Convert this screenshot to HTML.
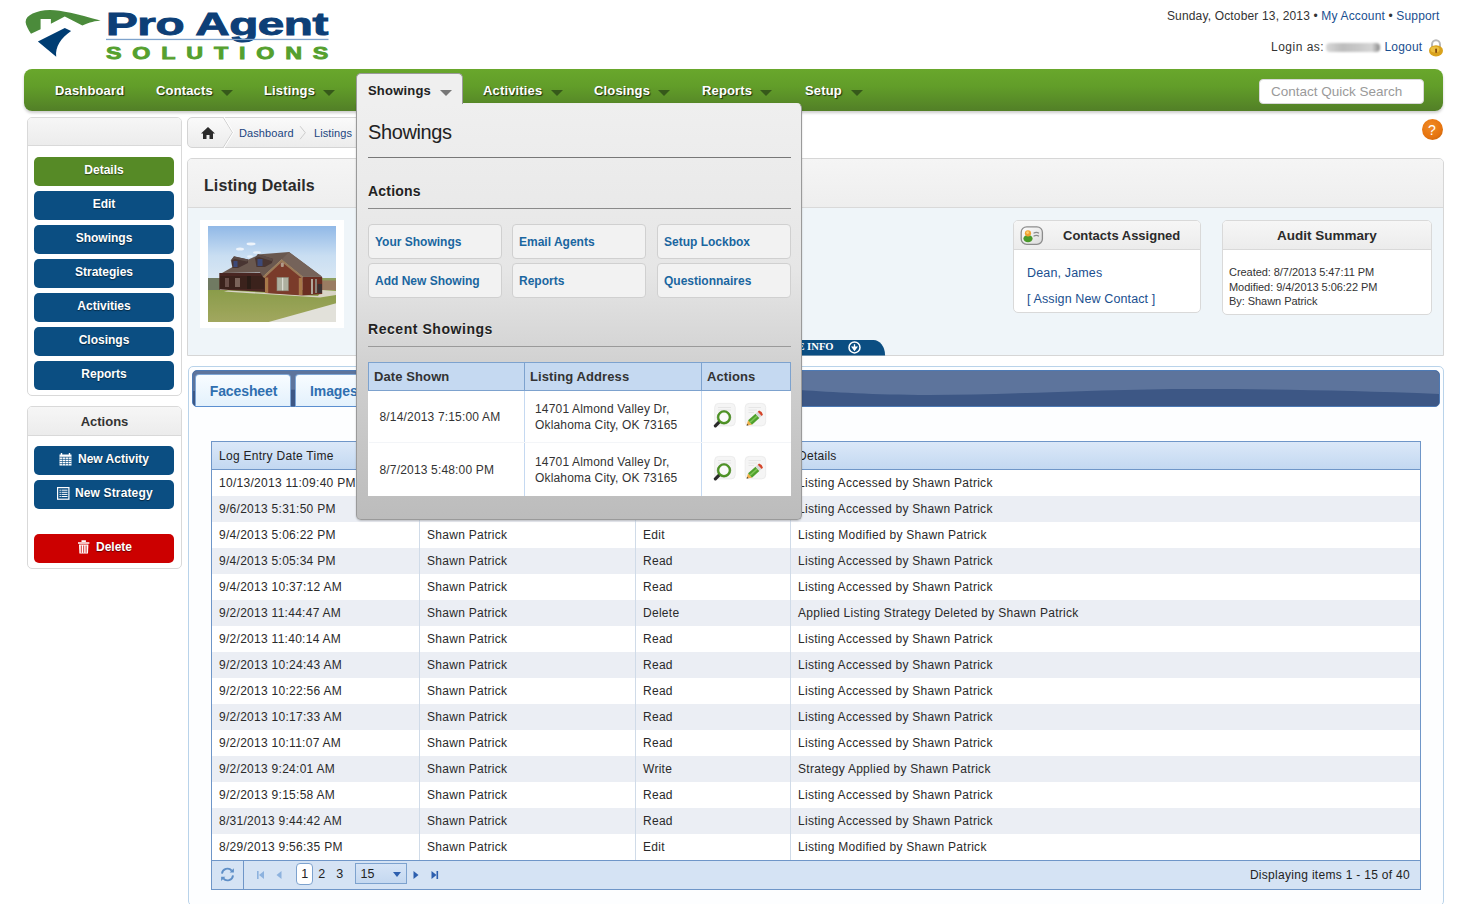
<!DOCTYPE html>
<html><head><meta charset="utf-8"><title>Listing Details</title>
<style>
*{box-sizing:border-box;margin:0;padding:0}
html,body{width:1463px;height:904px;overflow:hidden;background:#fff;font-family:"Liberation Sans",Arial,sans-serif;font-size:12px;color:#333}
.abs{position:absolute}
a{color:#1a4f8f;text-decoration:none}
/* header */
#toplinks{position:absolute;right:23.5px;top:9px;font-size:12px;letter-spacing:.16px;color:#333;white-space:nowrap}
#login{font-size:12px;color:#333;white-space:nowrap}
/* nav */
#nav{position:absolute;left:24px;top:69px;width:1419px;height:42px;border-radius:8px;background:linear-gradient(#69a72c 0%,#629e29 40%,#5a8f28 70%,#527f27 100%);box-shadow:0 2px 3px rgba(0,0,0,.2)}
#nav .it{position:absolute;top:14px;letter-spacing:.15px;font-weight:bold;font-size:13px;color:#fff;text-shadow:1px 1px 1px rgba(0,0,0,.7);white-space:nowrap}
.arr{position:absolute;width:0;height:0;margin-top:.5px;border-left:6.5px solid transparent;border-right:6.5px solid transparent;border-top:6.5px solid #36591a}
#search{position:absolute;left:1235px;top:10px;width:165px;height:25px;background:#fff;border-radius:4px;border:1px solid #d8d8d8;color:#9a9a9a;font-size:13.5px;line-height:24px;padding-left:11px}
/* sidebar */
.panel{position:absolute;border:1px solid #d9d9d9;border-radius:5px;background:#fff}
.phead{background:linear-gradient(#f6f6f6,#ececec);border-bottom:1px solid #d9d9d9;border-radius:4px 4px 0 0}
.btn{position:absolute;left:34px;width:140px;height:29px;border-radius:5px;background:#0b4e82;color:#fff;font-weight:bold;font-size:12px;text-align:center;line-height:27px;text-shadow:0 1px 1px rgba(0,0,0,.5)}

.tab{position:absolute;top:374px;height:33px;border:1px solid #7ea6d6;border-bottom:1px solid #5b8fd0;border-radius:4px 4px 0 0;background:linear-gradient(#f8fcff,#e3f1fc);color:#2f6fb0;font-weight:bold;font-size:14px;text-align:center;line-height:32px;letter-spacing:-.1px;padding-left:1px}
#grid{position:absolute;left:212px;top:442px;letter-spacing:.28px;width:1208px;border-collapse:separate;border-spacing:0;table-layout:fixed;font-size:12px;color:#2a2a2a}
#grid th{height:28px;background:linear-gradient(#dbe8f8,#c3d8f1);border-bottom:1px solid #6f96c8;border-left:1px solid #9dbbe0;text-align:left;font-weight:normal;padding-left:7px;color:#222}
#grid th:first-child{border-left:none}
#grid td{height:26px;padding-left:7px;padding-top:0;border-left:1px solid #d0dbe8;white-space:nowrap}
#grid td:first-child{border-left:none}
#grid tr.alt td{background:#ebeef4}
#pager{position:absolute;left:212px;top:860px;width:1208px;height:29px;background:#d5e3f4;border-top:1px solid #6f96c8}

#dd{position:absolute;left:356px;top:103px;width:446px;height:417px;border:1px solid #9a9a9a;border-top-color:#ededed;border-radius:0 5px 5px 5px;background:linear-gradient(#efefef 0%,#e6e6e6 40%,#cfcfcf 65%,#bcbcbc 100%);z-index:10;box-shadow:0 1px 2px rgba(0,0,0,.2)}
#dd .hr{position:absolute;left:11px;width:423px;height:1px;background:#777}
#dd .h3{left:11px;font-size:14px;font-weight:bold;color:#222;letter-spacing:.2px;text-shadow:0 1px 0 rgba(255,255,255,.6)}
#dd .mb{position:absolute;width:134px;height:35px;border:1px solid #d0d0d0;border-radius:4px;background:#f2f2f2;color:#1a66a0;font-weight:bold;font-size:12px;line-height:35px;padding-left:6px}
#rs{position:absolute;left:11px;top:258px;width:423px;border-collapse:collapse;table-layout:fixed;background:#fff;font-size:12px;color:#333}
#rs th{height:28px;background:#c5d9f1;border:1px solid #7da2ce;text-align:left;padding-left:5px;font-size:13px;font-weight:bold;color:#333;letter-spacing:.1px}
#rs td{height:52px;padding-top:0;letter-spacing:.17px;border-left:1px solid #c5d9f1;border-bottom:1px solid #f3f5f8;vertical-align:middle}
#rs td:first-child{border-left:none}
#rs tr.r2 td{height:53px;border-bottom:none;padding-top:2px}
#rs .dt{padding-left:11px}
#rs .ad{display:block;padding-left:10px;line-height:16px}
</style></head><body>

<!-- LOGO -->
<svg class="abs" style="left:0;top:0" width="340" height="66" viewBox="0 0 340 66">
 <path d="M25.6 21.9 C26 15 36 10.6 49.9 10.1 C62 10.2 76 14 100.6 20.6 C92 21.5 87 23.5 82.4 25.6 L64.8 16.6 L50.9 23.8 L50.9 19.1 L40.6 19.1 L40.6 29.2 L31 33.7 C28 29 25.8 25 25.6 21.9 Z" fill="#4b8b3b"/>
 <path d="M64.8 28 L71.1 31.1 C61 38 55 47 56.2 56.8 L37.9 41.5 Z" fill="#003d73"/>
 <g transform="translate(106,34.5) scale(1.49,1)"><text x="0" y="0" font-family="Liberation Sans,sans-serif" font-weight="bold" font-size="32" fill="#0d3f77" stroke="#0d3f77" stroke-width=".9" letter-spacing="-.3">Pro Agent</text></g>
 <rect x="106" y="38.8" width="222.5" height="1.3" fill="#7fa3cc"/>
 <g transform="translate(106,59.4) scale(1.42,1)"><text x="0" y="0" font-family="Liberation Sans,sans-serif" font-weight="bold" font-size="16.4" fill="#55a02e" stroke="#55a02e" stroke-width=".8" letter-spacing="7.62">SOLUTIONS</text></g>
</svg>

<div id="toplinks">Sunday, October 13, 2013 • <a>My Account</a> • <a>Support</a></div>
<div id="login"><span class="abs" style="left:1271px;top:40px;letter-spacing:.5px">Login as:</span>
<span class="abs" style="left:1326px;top:42.5px;width:54px;height:9px;background:linear-gradient(90deg,#d8d8d8,#bdbdbd 30%,#c8c8c8 60%,#d5d5d5 85%,#888 100%);border-radius:4px;filter:blur(1.2px)"></span>
<a class="abs" style="left:1384.5px;top:40px;letter-spacing:.2px">Logout</a>
<svg class="abs" style="left:1427px;top:38px" width="18" height="20" viewBox="0 0 18 20">
 <path d="M5 10 V6.5 A4 4.2 0 0 1 13 6.5 V10" fill="none" stroke="#b8b8b8" stroke-width="2"/>
 <ellipse cx="9" cy="12.8" rx="7" ry="5.6" fill="#d9a21c"/>
 <ellipse cx="8" cy="11.5" rx="4.5" ry="3" fill="#f0c84a" opacity=".8"/>
 <rect x="8.3" y="10.5" width="1.6" height="4.6" rx=".8" fill="#7a3e0a"/>
</svg></div>

<!-- NAV -->
<div id="nav">
 <div class="it" style="left:31px">Dashboard</div>
 <div class="it" style="left:132px">Contacts</div><div class="arr" style="left:197px;top:20px"></div>
 <div class="it" style="left:240px">Listings</div><div class="arr" style="left:299px;top:20px"></div>
 <div class="it" style="left:459px">Activities</div><div class="arr" style="left:527px;top:20px"></div>
 <div class="it" style="left:570px">Closings</div><div class="arr" style="left:634px;top:20px"></div>
 <div class="it" style="left:678px">Reports</div><div class="arr" style="left:736px;top:20px"></div>
 <div class="it" style="left:781px">Setup</div><div class="arr" style="left:827px;top:20px"></div>
 <div id="search">Contact Quick Search</div>
</div>

<!-- SIDEBAR -->
<div class="panel" style="left:27px;top:117px;width:155px;height:279px"><div class="phead" style="height:28px"></div></div>
<div class="btn" style="top:157px;background:#568a26">Details</div>
<div class="btn" style="top:191px">Edit</div>
<div class="btn" style="top:225px">Showings</div>
<div class="btn" style="top:259px">Strategies</div>
<div class="btn" style="top:293px">Activities</div>
<div class="btn" style="top:327px">Closings</div>
<div class="btn" style="top:361px">Reports</div>

<div class="panel" style="left:27px;top:406px;width:155px;height:163px"><div class="phead" style="height:29px;text-align:center;font-weight:bold;font-size:13px;line-height:29px;color:#333">Actions</div></div>
<div class="btn" style="top:446px;text-align:left;padding-left:44px"><svg class="abs" style="left:25px;top:7px" width="13" height="13" viewBox="0 0 13 13"><path d="M.5 1.5 H12.5 V12.5 H.5Z" fill="#fff"/><path d="M2.5 0 V2 M10.5 0 V2" stroke="#fff" stroke-width="1.4"/><path d="M.5 4.2 H12.5 M.5 6.4 H12.5 M.5 8.5 H12.5 M.5 10.6 H12.5" stroke="#0b4e82" stroke-width=".7"/><path d="M3.5 4 V12.5 M6.5 4 V12.5 M9.5 4 V12.5" stroke="#0b4e82" stroke-width=".5"/></svg>New Activity</div>
<div class="btn" style="top:480px;text-align:left;padding-left:41px;letter-spacing:.14px"><svg class="abs" style="left:23px;top:7px" width="13" height="13" viewBox="0 0 13 13"><rect x=".6" y=".6" width="11.3" height="11.6" fill="none" stroke="#fff" stroke-width="1.2"/><path d="M2.5 3.2 H10.5 M2.5 5.3 H10.5 M2.5 7.4 H10.5 M2.5 9.5 H10.5" stroke="#fff" stroke-width="1"/><path d="M4.3 2 V11" stroke="#0b4e82" stroke-width=".7"/></svg>New Strategy</div>
<div class="btn" style="top:534px;background:#cc0000;text-align:left;padding-left:62px"><svg class="abs" style="left:44px;top:6px" width="12" height="14" viewBox="0 0 12 14"><path d="M0 2.2 H11.4 V3.8 H0Z M3.5 .3 H7.9 V2 H3.5Z" fill="#fff"/><path d="M1 4.6 H10.4 L10 13.6 H1.4Z" fill="#fff"/><path d="M3.3 5.5 V12.8 M5.7 5.5 V12.8 M8.1 5.5 V12.8" stroke="#cc0000" stroke-width=".8"/></svg>Delete</div>


<!-- BREADCRUMB -->
<div class="panel" style="left:187px;top:117px;width:300px;height:31px;background:linear-gradient(#fafafa,#ececec);border-color:#d4d4d4"></div>
<svg class="abs" style="left:187px;top:117px;overflow:hidden" width="200" height="31" viewBox="0 0 200 31">
 <path d="M14 16.5 L21 10 L28 16.5 L26 16.5 L26 22 L22.5 22 L22.5 18 L19.5 18 L19.5 22 L16 22 L16 16.5 Z" fill="#2b2b2b"/>
 <path d="M36 0 L45.5 15.5 L36 31" fill="none" stroke="#cdcdcd" stroke-width="1"/>
 <path d="M37 0 L46.5 15.5 L37 31" fill="none" stroke="#fff" stroke-width="1"/>
 <path d="M113.1 9.2 L118.3 15.7 L113.1 22.2" fill="none" stroke="#cdcdcd" stroke-width="1"/>
</svg>
<div class="abs" style="left:239px;top:127px;font-size:11px;letter-spacing:.1px;color:#1b4580">Dashboard</div>
<div class="abs" style="left:314px;top:127px;font-size:11px;letter-spacing:.1px;color:#1b4580">Listings</div>

<!-- help icon -->
<div class="abs" style="left:1421.5px;top:118.5px;width:21px;height:21px;border-radius:50%;background:radial-gradient(circle at 42% 35%,#f08a25,#e6740f 60%,#c9640c 85%,#a8500a);color:#fff;font-size:14px;text-align:center;line-height:22px">?</div>

<!-- LISTING DETAILS -->
<div class="panel" style="left:187px;top:158px;width:1257px;height:198px;background:#eff5f9;border-color:#d6d6d6;border-radius:5px 5px 0 0">
 <div class="phead" style="height:49px;background:linear-gradient(#f5f5f5,#eeeeee)"></div>
</div>
<div class="abs" style="left:204px;top:177px;font-size:16px;font-weight:bold;color:#2b2b2b;letter-spacing:.1px">Listing Details</div>
<div class="abs" style="left:200px;top:220px;width:144px;height:108px;background:#fff"></div>
<svg class="abs" style="left:208px;top:226px" width="128" height="96" viewBox="0 0 128 96">
 <defs><linearGradient id="sky" x1="0" y1="0" x2="0" y2="1"><stop offset="0" stop-color="#8db6e6"/><stop offset=".55" stop-color="#c9def2"/><stop offset="1" stop-color="#dbe8f3"/></linearGradient>
 <linearGradient id="grs" x1="0" y1="0" x2="0" y2="1"><stop offset="0" stop-color="#8a9c4a"/><stop offset="1" stop-color="#a3a860"/></linearGradient>
 <filter id="bl"><feGaussianBlur stdDeviation=".45"/></filter></defs>
 <g filter="url(#bl)">
 <rect x="-2" y="-2" width="132" height="58" fill="url(#sky)"/>
 <ellipse cx="32" cy="23" rx="4" ry="1.6" fill="#eef4fb"/><ellipse cx="43" cy="18" rx="4.5" ry="1.4" fill="#eef4fb"/><ellipse cx="49" cy="26.5" rx="4" ry="1.3" fill="#e6f0fa"/><ellipse cx="42" cy="30.5" rx="3" ry="1.2" fill="#e6f0fa"/>
 <rect x="-2" y="52" width="14" height="13" fill="#6f7a62"/>
 <rect x="112" y="52" width="18" height="13" fill="#9a7b62"/>
 <rect x="114" y="52" width="16" height="2.5" fill="#8ea060"/>
 <rect x="-2" y="64" width="132" height="34" fill="url(#grs)"/>
 <path d="M16 65.5 L112 71.5 L128 69 L128 65 L114 64 L110 70 L20 64.5Z" fill="#d8d4c6"/>
 <path d="M57 97 L129 77 L129 97Z" fill="#e2e1da"/>
 <!-- porch/left wall -->
 <path d="M11.3 47 L57 47 L57 66 L11.3 63.5Z" fill="#4a2820"/>
 <rect x="12" y="50" width="44" height="13" fill="#3a211c"/>
 <rect x="17" y="52" width="4" height="9" fill="#6a5048"/><rect x="27" y="52" width="5" height="9" fill="#7a645a"/><rect x="39" y="50" width="4" height="13" fill="#2a1a18"/>
 <!-- right side wall -->
 <path d="M94.3 51 L114.2 51 L114.2 68 L94.3 69.5Z" fill="#6a2f24"/>
 <rect x="103" y="53" width="2" height="15" fill="#b0a89a"/><rect x="107" y="53" width="2" height="14" fill="#8a8278"/><rect x="109.5" y="58" width="4.5" height="9" fill="#3a3230"/>
 <!-- main roof -->
 <path d="M14 46.9 L28 39 L52.4 28.3 L81 26 L114.2 50.8 L94.9 50.8 L73.7 33.6 L55 50.8 L52 46.5 Z" fill="#6a5850"/>
 <path d="M73.7 33.6 L81 26 L114.2 50.8 L94.9 50.8Z" fill="#75635a"/>
 <!-- dormers -->
 <path d="M23 34.5 L26 30.5 L40 33.5 L40 37 L30 42 L24.5 42Z" fill="#4a3630"/><rect x="25.5" y="35" width="4" height="6" fill="#3c4a78"/><path d="M22.5 34.8 L26 30.3 L40.5 33.5 L39 35.5 L27 33Z" fill="#5c4c46"/>
 <path d="M47 32 L50 28.3 L65 33 L64 37 L57 41 L48.5 41Z" fill="#4a3630"/><rect x="49.5" y="33" width="5" height="7" fill="#3c4a78"/><path d="M46.5 32.3 L50 28 L65.5 33 L63.5 35 L51 31Z" fill="#5c4c46"/>
 <!-- front gable -->
 <path d="M73.7 34.8 L94.3 51.5 L94.3 69.5 L57 67 L57 51 Z" fill="#7a3a2c"/>
 <path d="M73.7 33.2 L95.5 51 L93.5 52 L73.7 36 L56.5 52 L54.5 50.8Z" fill="#9a7a58"/>
 <rect x="57" y="51.5" width="3.2" height="15.5" fill="#a87848"/><rect x="90.8" y="52" width="3.5" height="17" fill="#a87848"/>
 <rect x="69" y="51.5" width="11.3" height="13.3" fill="#aeb0a0"/><rect x="74.2" y="51.5" width="1" height="13.3" fill="#e8e8e0"/><rect x="69" y="51.5" width="11.3" height="13.3" fill="none" stroke="#8a8a7a" stroke-width=".6"/>
 <rect x="72.8" y="36.5" width="3" height="4.5" rx="1" fill="#b09a88"/>
 </g>
</svg>

<!-- Contacts Assigned -->
<div class="panel" style="left:1013px;top:220px;width:188px;height:93px;border-color:#d9d9d9">
 <div class="phead" style="height:29px;font-weight:bold;font-size:13px;line-height:30px;color:#2b2b2b;padding-left:49px">Contacts Assigned</div>
 <div style="padding:16px 0 0 13px;font-size:12.5px;letter-spacing:.15px;color:#1a4f8f">Dean, James</div>
 <div style="padding:12px 0 0 13px;font-size:12.5px;letter-spacing:.12px;color:#1a4f8f">[ Assign New Contact ]</div>
</div>
<svg class="abs" style="left:1019px;top:225px" width="26" height="22" viewBox="0 0 26 22">
 <defs><linearGradient id="cg" x1="0" y1="0" x2="1" y2="1"><stop offset="0" stop-color="#fdfdfd"/><stop offset="1" stop-color="#dcdcdc"/></linearGradient></defs>
 <rect x="2.2" y="1.8" width="21.2" height="17.6" rx="5.5" fill="url(#cg)" stroke="#8c8c8c" stroke-width="1.3"/>
 <ellipse cx="9" cy="13.6" rx="4.6" ry="3.6" fill="#4a9a2a"/>
 <circle cx="9" cy="8.3" r="3.1" fill="#f0a030"/><circle cx="8.6" cy="7.6" r="1.4" fill="#fbd070"/>
 <path d="M14.5 8.2 Q17.5 6.6 20 8.2 M14.5 11.2 Q17.5 9.6 20 11.2" fill="none" stroke="#8a8a8a" stroke-width="1.1"/>
</svg>
<!-- Audit Summary -->
<div class="panel" style="left:1222px;top:220px;width:210px;height:95px;border-color:#d9d9d9">
 <div class="phead" style="height:29px;font-weight:bold;font-size:13.5px;line-height:30px;color:#2b2b2b;text-align:center">Audit Summary</div>
 <div style="padding:15px 0 0 6px;font-size:11px;letter-spacing:-.05px;line-height:14.5px;color:#333">Created: 8/7/2013 5:47:11 PM<br>Modified: 9/4/2013 5:06:22 PM<br>By: Shawn Patrick</div>
</div>

<!-- MORE INFO tab -->
<svg class="abs" style="left:700px;top:340px" width="190" height="16" viewBox="0 0 190 16">
 <path d="M0 15.4 V0 H173.5 A11.6 15.4 0 0 1 185.1 15.4 Z" fill="#0b4e82"/>
 <text x="71.5" y="10.4" font-family="Liberation Serif,serif" font-weight="bold" font-size="10.6" fill="#fff">MORE INFO</text>
 <circle cx="154.5" cy="7.4" r="5.5" fill="none" stroke="#fff" stroke-width="1.5"/>
 <path d="M154.5 4.2 V8.2 M152.3 7.2 L154.5 10.2 L156.7 7.2Z" stroke="#fff" stroke-width="1.3" fill="#fff"/>
</svg>

<!-- TAB CONTAINER -->
<div class="abs" style="left:188px;top:366px;width:1256px;height:540px;border:1px solid #b9d3ea;border-radius:5px;background:#fdfeff"></div>
<div class="abs" style="left:192px;top:370px;width:1248px;height:37px;border-radius:5px;background:#3f5a88;overflow:hidden;border:1px solid #4d7ab5">
 <svg width="1248" height="37" viewBox="0 0 1248 37" preserveAspectRatio="none"><rect width="1248" height="37" fill="#3d5785"/><path d="M0 0 H1248 V23 C1160 19.5 1080 18 1005 18 C900 18 820 24 736 24 C680 24 640 21 607 19 C500 14 300 16 0 20 Z" fill="#5d749c"/></svg>
</div>
<div class="tab" style="left:195px;width:96px">Facesheet</div>
<div class="tab" style="left:295px;width:78px;text-align:left;padding-left:14px">Images</div>

<!-- GRID -->
<div class="abs" style="left:211px;top:441px;width:1210px;height:449px;border:1px solid #6f96c8;background:#fff"></div>
<table id="grid" cellspacing="0">
<colgroup><col style="width:207px"><col style="width:216px"><col style="width:155px"><col></colgroup>
<tr class="hd"><th>Log Entry Date Time</th><th>User</th><th>Action</th><th>Details</th></tr>
<tr><td>10/13/2013 11:09:40 PM</td><td>Shawn Patrick</td><td>Read</td><td>Listing Accessed by Shawn Patrick</td></tr>
<tr class="alt"><td>9/6/2013 5:31:50 PM</td><td>Shawn Patrick</td><td>Read</td><td>Listing Accessed by Shawn Patrick</td></tr>
<tr><td>9/4/2013 5:06:22 PM</td><td>Shawn Patrick</td><td>Edit</td><td>Listing Modified by Shawn Patrick</td></tr>
<tr class="alt"><td>9/4/2013 5:05:34 PM</td><td>Shawn Patrick</td><td>Read</td><td>Listing Accessed by Shawn Patrick</td></tr>
<tr><td>9/4/2013 10:37:12 AM</td><td>Shawn Patrick</td><td>Read</td><td>Listing Accessed by Shawn Patrick</td></tr>
<tr class="alt"><td>9/2/2013 11:44:47 AM</td><td>Shawn Patrick</td><td>Delete</td><td>Applied Listing Strategy Deleted by Shawn Patrick</td></tr>
<tr><td>9/2/2013 11:40:14 AM</td><td>Shawn Patrick</td><td>Read</td><td>Listing Accessed by Shawn Patrick</td></tr>
<tr class="alt"><td>9/2/2013 10:24:43 AM</td><td>Shawn Patrick</td><td>Read</td><td>Listing Accessed by Shawn Patrick</td></tr>
<tr><td>9/2/2013 10:22:56 AM</td><td>Shawn Patrick</td><td>Read</td><td>Listing Accessed by Shawn Patrick</td></tr>
<tr class="alt"><td>9/2/2013 10:17:33 AM</td><td>Shawn Patrick</td><td>Read</td><td>Listing Accessed by Shawn Patrick</td></tr>
<tr><td>9/2/2013 10:11:07 AM</td><td>Shawn Patrick</td><td>Read</td><td>Listing Accessed by Shawn Patrick</td></tr>
<tr class="alt"><td>9/2/2013 9:24:01 AM</td><td>Shawn Patrick</td><td>Write</td><td>Strategy Applied by Shawn Patrick</td></tr>
<tr><td>9/2/2013 9:15:58 AM</td><td>Shawn Patrick</td><td>Read</td><td>Listing Accessed by Shawn Patrick</td></tr>
<tr class="alt"><td>8/31/2013 9:44:42 AM</td><td>Shawn Patrick</td><td>Read</td><td>Listing Accessed by Shawn Patrick</td></tr>
<tr><td>8/29/2013 9:56:35 PM</td><td>Shawn Patrick</td><td>Edit</td><td>Listing Modified by Shawn Patrick</td></tr>
</table>
<div id="pager">
 <div class="abs" style="left:31px;top:0;width:1px;height:28px;background:#6f96c8"></div>
 <svg class="abs" style="left:7px;top:5px" width="17" height="17" viewBox="0 0 20 20">
  <path d="M3.5 9 A6.5 6.5 0 0 1 15 5.5" fill="none" stroke="#5f8fc7" stroke-width="2.2"/>
  <path d="M16.5 11 A6.5 6.5 0 0 1 5 14.5" fill="none" stroke="#5f8fc7" stroke-width="2.2"/>
  <path d="M12.5 7.5 L17.5 7.5 L17.5 2.5 Z" fill="#5f8fc7"/>
  <path d="M7.5 12.5 L2.5 12.5 L2.5 17.5 Z" fill="#5f8fc7"/>
 </svg>
 <svg class="abs" style="left:44px;top:8px" width="190" height="12" viewBox="0 0 190 12">
  <rect x="1" y="2" width="1.6" height="8" fill="#8db2de"/><path d="M8 2 L3 6 L8 10Z" fill="#8db2de"/>
  <path d="M25.5 2 L20.5 6 L25.5 10Z" fill="#8db2de"/>
  <path d="M157.5 2 L162.5 6 L157.5 10Z" fill="#2d5fae"/>
  <path d="M175.5 2 L180.5 6 L175.5 10Z" fill="#2d5fae"/><rect x="180.5" y="2" width="1.6" height="8" fill="#2d5fae"/>
 </svg>
 <div class="abs" style="left:84px;top:2px;width:17px;height:22px;border:1px solid #7da2ce;border-radius:4px;background:#fff"></div>
 <div class="abs" style="left:89.3px;top:5.5px;font-size:12.5px;color:#222">1</div>
 <div class="abs" style="left:106.3px;top:5.5px;font-size:12.5px;color:#222">2</div>
 <div class="abs" style="left:124.3px;top:5.5px;font-size:12.5px;color:#222">3</div>
 <div class="abs" style="left:143px;top:2px;width:52px;height:21px;border:1px solid #7da2ce;background:linear-gradient(#d6e4f6,#c4d8f0)"></div>
 <div class="abs" style="left:148.5px;top:5.5px;font-size:12.5px;color:#222">15</div>
 <div class="abs" style="left:181px;top:11px;width:0;height:0;border-left:4.5px solid transparent;border-right:4.5px solid transparent;border-top:5px solid #2d5fae"></div>

 <div class="abs" style="right:10px;top:6.5px;font-size:12px;letter-spacing:.3px;color:#222">Displaying items 1 - 15 of 40</div>
</div>

<!-- SHOWINGS TAB + DROPDOWN -->
<div class="abs" style="left:356px;top:73px;width:106.5px;height:30.5px;background:#efefef;border:1px solid #9a9a9a;border-bottom:none;border-radius:5px 5px 0 0;z-index:11"></div>
<div class="abs" style="left:368px;top:83px;font-weight:bold;font-size:13px;letter-spacing:.2px;color:#222;z-index:12">Showings</div>
<div class="arr" style="left:440px;top:89px;border-top-color:#777;z-index:12"></div>
<div id="dd">
 <div class="abs" style="left:11px;top:17px;font-size:20px;color:#222;letter-spacing:-0.4px">Showings</div>
 <div class="hr" style="top:53px"></div>
 <div class="abs h3" style="top:79px">Actions</div>
 <div class="hr" style="top:104px;background:#8a8a8a"></div>
 <div class="mb" style="left:11px;top:120px">Your Showings</div>
 <div class="mb" style="left:155px;top:120px">Email Agents</div>
 <div class="mb" style="left:300px;top:120px">Setup Lockbox</div>
 <div class="mb" style="left:11px;top:159px">Add New Showing</div>
 <div class="mb" style="left:155px;top:159px">Reports</div>
 <div class="mb" style="left:300px;top:159px">Questionnaires</div>
 <div class="abs h3" style="top:217px;letter-spacing:.55px">Recent Showings</div>
 <div class="hr" style="top:242px;background:#9a9a9a"></div>
 <table id="rs" cellspacing="0">
 <colgroup><col style="width:156px"><col style="width:177px"><col style="width:89px"></colgroup>
 <tr><th>Date Shown</th><th>Listing Address</th><th>Actions</th></tr>
 <tr><td><span class="dt">8/14/2013 7:15:00 AM</span></td><td><span class="ad">14701 Almond Valley Dr,<br>Oklahoma City, OK 73165</span></td><td></td></tr>
 <tr class="r2"><td><span class="dt">8/7/2013 5:48:00 PM</span></td><td><span class="ad">14701 Almond Valley Dr,<br>Oklahoma City, OK 73165</span></td><td></td></tr>
 </table>
</div>
<svg class="abs" style="left:712px;top:402px;z-index:13" width="24" height="26" viewBox="0 0 24 26">
<rect x="2.7" y="1.4" width="20.5" height="22.5" rx="4" fill="#f5f5f5" stroke="#ececec" stroke-width="1"/>
<path d="M6 5.5 H19 M6 8 H19" stroke="#e6e6e6" stroke-width="1"/>
<path d="M7.6 19.6 L3.4 23.8" stroke="#2a2a2a" stroke-width="3.2" stroke-linecap="round"/>
<circle cx="12" cy="15.3" r="5.8" fill="#fafafa" stroke="#4f9426" stroke-width="2.2"/>
<circle cx="12" cy="15.3" r="6.8" fill="none" stroke="#3c7a18" stroke-width=".5"/>
</svg><svg class="abs" style="left:743px;top:402px;z-index:13" width="24" height="26" viewBox="0 0 24 26">
<rect x="2.2" y="1.4" width="20.5" height="22.5" rx="4" fill="#f5f5f5" stroke="#ececec" stroke-width="1"/>
<path d="M5.5 5.5 H18 M5.5 8 H14 M5.5 10.5 H11" stroke="#e6e6e6" stroke-width="1"/>
<g transform="translate(3.6,23.6) rotate(-42)">
 <path d="M0 0 L4.6 -2.9 L4.6 2.9 Z" fill="#f2b04a"/>
 <path d="M0 0 L1.6 -1 L1.6 1 Z" fill="#333"/>
 <rect x="4.6" y="-2.9" width="10" height="5.8" fill="#4fa02c"/>
 <rect x="4.6" y="-.9" width="10" height="1.6" fill="#7cc455"/>
 <rect x="14.6" y="-2.9" width="3" height="5.8" fill="#d8d8d8"/>
 <path d="M17.6 -2.9 H19.4 Q21 0 19.4 2.9 H17.6 Z" fill="#d4452a"/>
</g></svg><svg class="abs" style="left:712px;top:455px;z-index:13" width="24" height="26" viewBox="0 0 24 26">
<rect x="2.7" y="1.4" width="20.5" height="22.5" rx="4" fill="#f5f5f5" stroke="#ececec" stroke-width="1"/>
<path d="M6 5.5 H19 M6 8 H19" stroke="#e6e6e6" stroke-width="1"/>
<path d="M7.6 19.6 L3.4 23.8" stroke="#2a2a2a" stroke-width="3.2" stroke-linecap="round"/>
<circle cx="12" cy="15.3" r="5.8" fill="#fafafa" stroke="#4f9426" stroke-width="2.2"/>
<circle cx="12" cy="15.3" r="6.8" fill="none" stroke="#3c7a18" stroke-width=".5"/>
</svg><svg class="abs" style="left:743px;top:455px;z-index:13" width="24" height="26" viewBox="0 0 24 26">
<rect x="2.2" y="1.4" width="20.5" height="22.5" rx="4" fill="#f5f5f5" stroke="#ececec" stroke-width="1"/>
<path d="M5.5 5.5 H18 M5.5 8 H14 M5.5 10.5 H11" stroke="#e6e6e6" stroke-width="1"/>
<g transform="translate(3.6,23.6) rotate(-42)">
 <path d="M0 0 L4.6 -2.9 L4.6 2.9 Z" fill="#f2b04a"/>
 <path d="M0 0 L1.6 -1 L1.6 1 Z" fill="#333"/>
 <rect x="4.6" y="-2.9" width="10" height="5.8" fill="#4fa02c"/>
 <rect x="4.6" y="-.9" width="10" height="1.6" fill="#7cc455"/>
 <rect x="14.6" y="-2.9" width="3" height="5.8" fill="#d8d8d8"/>
 <path d="M17.6 -2.9 H19.4 Q21 0 19.4 2.9 H17.6 Z" fill="#d4452a"/>
</g></svg></body></html>
